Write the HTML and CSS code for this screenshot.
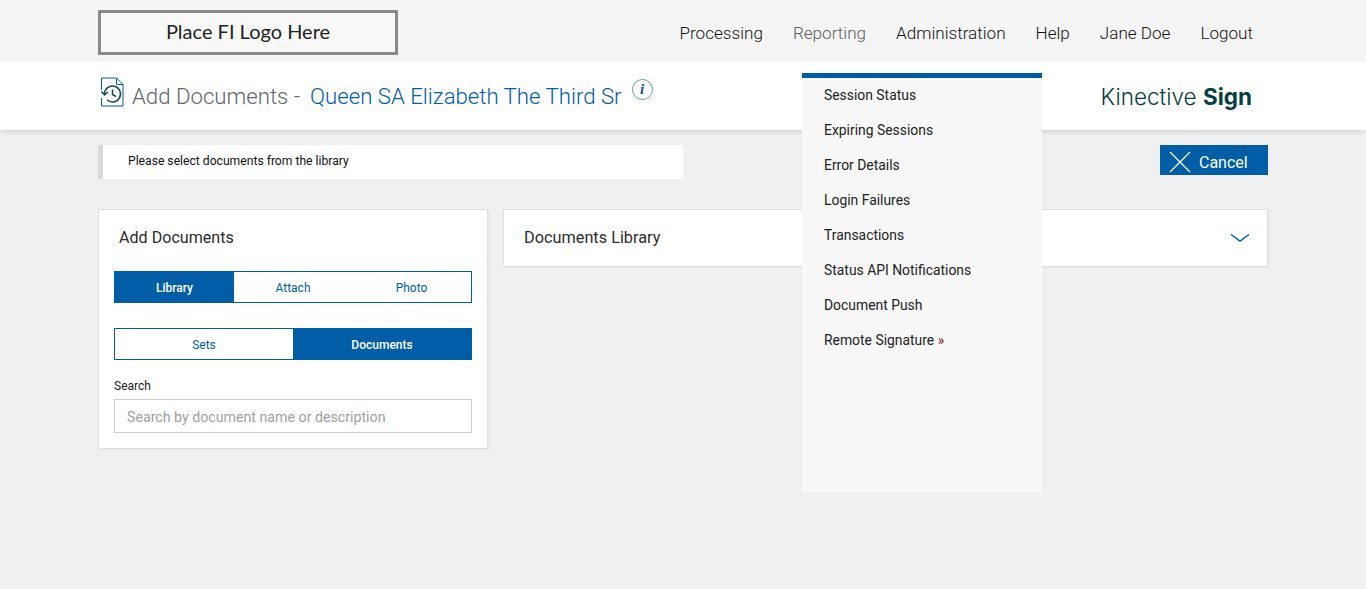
FILE: index.html
```html
<!DOCTYPE html>
<html lang="en">
<head>
<meta charset="utf-8">
<title>Add Documents</title>
<link rel="stylesheet" href="styles.css">
</head>
<body>
<header class="topbar">
  <div class="logo-box">Place FI Logo Here</div>
  <nav class="nav">
    <a>Processing</a>
    <a class="nav-active">Reporting</a>
    <a>Administration</a>
    <a>Help</a>
    <a>Jane Doe</a>
    <a>Logout</a>
  </nav>
</header>
<section class="titlebar">
  <div class="title">
    <svg class="doc-icon" width="24" height="30" viewBox="0 0 24 30" fill="none">
      <path d="M1.5 13V1h15l6.500 6.500V29H1.500V21" stroke="#005da6" stroke-width="1"/>
      <path d="M16.500 1v6.500h6.500" stroke="#005da6" stroke-width="1"/>
      <path d="M4.500 17a8 8 0 1 1 2.500 5.800" stroke="#17494d" stroke-width="1.500"/>
      <path d="M1.500 14.500l3 3.500 3.500-3" stroke="#17494d" stroke-width="1.500"/>
      <path d="M12.500 12.500v5l3.500 2" stroke="#17494d" stroke-width="1.500"/>
    </svg>
    <span class="title-main">Add Documents -</span>
    <span class="title-name">Queen SA Elizabeth The Third Sr</span>
    <span class="info">i</span>
  </div>
  <div class="brand">Kinective <b>Sign</b></div>
</section>
<div class="menu">
  <a>Session Status</a>
  <a>Expiring Sessions</a>
  <a>Error Details</a>
  <a>Login Failures</a>
  <a>Transactions</a>
  <a>Status API Notifications</a>
  <a>Document Push</a>
  <a>Remote Signature <span class="raquo">»</span></a>
</div>
<main class="content">
  <div class="notice-row">
    <div class="notice">Please select documents from the library</div>
    <button class="cancel">
      <svg width="22" height="22" viewBox="0 0 22 22" fill="none"><path d="M1 1l20 20M21 1L1 21" stroke="#fff" stroke-width="1.300"/></svg>
      Cancel
    </button>
  </div>
  <div class="columns">
    <section class="card add-card">
      <h2 class="card-title">Add Documents</h2>
      <div class="tabs tabs-three">
        <span class="tab tab-on">Library</span>
        <span class="tab">Attach</span>
        <span class="tab">Photo</span>
      </div>
      <div class="tabs tabs-two">
        <span class="tab">Sets</span>
        <span class="tab tab-on">Documents</span>
      </div>
      <label class="search-label" for="search">Search</label>
      <input class="search" id="search" type="text" placeholder="Search by document name or description">
    </section>
    <section class="card library-card">
      <h2 class="library-title">Documents Library</h2>
      <svg width="20" height="10" viewBox="0 0 20 10" fill="none"><path d="M1 1.500l9 6.500 9-6.500" stroke="#005da6" stroke-width="1.500"/></svg>
    </section>
  </div>
</main>
</body>
</html>
```
FILE: styles.css
```css
* { box-sizing: border-box; }
html, body { height: 100%; }
body {
  margin: 0;
  background: #f0f0f0;
  font-family: Roboto, "Liberation Sans", sans-serif;
  overflow: hidden;
}
.topbar {
  height: 62px;
  background: #f5f5f5;
  padding: 10px 98px 0;
  display: flex;
  justify-content: space-between;
  align-items: flex-start;
}
.logo-box {
  width: 300px;
  height: 45px;
  border: 3px solid #8a8a8a;
  background: #f9f9f9;
  display: flex;
  align-items: center;
  justify-content: center;
  font-family: Lato, sans-serif;
  font-size: 20px;
  color: #222;
  padding: 0 0 4px 0;
}
.nav {
  display: flex;
  gap: 30px;
  padding: 12px 15px 0 0;
  font-size: 17.1px;
  font-weight: 300;
  line-height: 22px;
  color: #111;
}
.nav-active { color: #5c5c5c; }
.titlebar {
  height: 68px;
  background: #fff;
  box-shadow: 0 4px 5px -2px rgba(0,0,0,.13);
  padding: 0 114px 0 100px;
  display: flex;
  justify-content: space-between;
  align-items: flex-start;
  position: relative;
}
.title {
  display: flex;
  align-items: flex-start;
  padding-top: 15px;
  font-size: 22.2px;
  font-weight: 300;
  line-height: 39px;
}
.doc-icon { margin-right: 8px; }
.title-main { color: #5d6670; margin-right: 10px; }
.title-name { color: #005da6; }
.info {
  width: 21px;
  height: 21px;
  border: 1px solid #5b9bd0;
  border-radius: 50%;
  margin: 2px 0 0 10px;
  font: italic bold 15px/19px "Liberation Serif", serif;
  text-align: center;
  color: #0f4f86;
}
.brand {
  padding-top: 19px;
  font-family: Inter, sans-serif;
  font-size: 22.5px;
  font-weight: 300;
  line-height: 32px;
  color: #053f44;
}
.brand b { font-weight: 700; }
.menu {
  position: absolute;
  left: 802px;
  top: 73px;
  width: 240px;
  height: 419px;
  background: #f8f8f8;
  border-top: 5px solid #005da6;
  padding: 0 22px;
  z-index: 2;
  font-size: 13.9px;
  color: #222;
}
.menu a { display: block; height: 35px; line-height: 35px; }
.raquo { color: #7a2020; }
.content { padding: 15px 98px 0; }
.notice-row {
  display: flex;
  justify-content: space-between;
  align-items: flex-start;
}
.notice {
  width: 585px;
  height: 34px;
  background: #fff;
  border-left: 5px solid #d9d9d9;
  padding-left: 25px;
  font-size: 12.15px;
  line-height: 32px;
  color: #111;
}
.cancel {
  width: 108px;
  height: 30px;
  background: #005da6;
  border: 0;
  color: #fff;
  font: 400 16px Roboto, sans-serif;
  display: flex;
  align-items: center;
  gap: 8px;
  padding: 4px 0 0 9px;
}
.cancel svg { margin-top: -1px; }
.columns {
  display: flex;
  align-items: flex-start;
  gap: 15px;
  margin-top: 30px;
}
.card {
  background: #fff;
  border: 1px solid #e0e0e0;
  box-shadow: 1px 1px 1px rgba(0,0,0,.04);
}
.add-card {
  width: 390px;
  height: 240px;
  padding: 0 15px;
}
.card-title {
  margin: 0;
  padding: 17px 0 0 5px;
  font-size: 16.1px;
  font-weight: 400;
  line-height: 21px;
  color: #2b2b2b;
  height: 61px;
}
.tabs {
  display: grid;
  height: 32px;
  border: 1px solid #005da6;
  font-size: 12px;
  color: #005da6;
}
.tabs-three { grid-template-columns: 119px 118px 1fr; }
.tabs-two { grid-template-columns: 1fr 1fr; margin-top: 25px; }
.tab { display: flex; align-items: center; justify-content: center; padding-top: 2px; }
.tab-on { background: #005da6; color: #fff; font-weight: 500; }
.search-label {
  display: block;
  margin-top: 19px;
  font-size: 12px;
  line-height: 15px;
  color: #222;
}
.search {
  display: block;
  width: 100%;
  height: 34px;
  margin-top: 5px;
  border: 1px solid #cfcfcf;
  padding: 2px 12px 0;
  font: 400 14.2px Roboto, sans-serif;
  background: #fff;
}
.search::placeholder { color: #a0a0a0; opacity: 1; }
.library-card {
  width: 765px;
  height: 58px;
  display: flex;
  align-items: center;
  justify-content: space-between;
  padding: 0 17px 2px 20px;
}
.library-card svg { margin-top: 2px; }
.library-title {
  margin: 0;
  font-size: 16.3px;
  font-weight: 400;
  color: #2b2b2b;
}
```
